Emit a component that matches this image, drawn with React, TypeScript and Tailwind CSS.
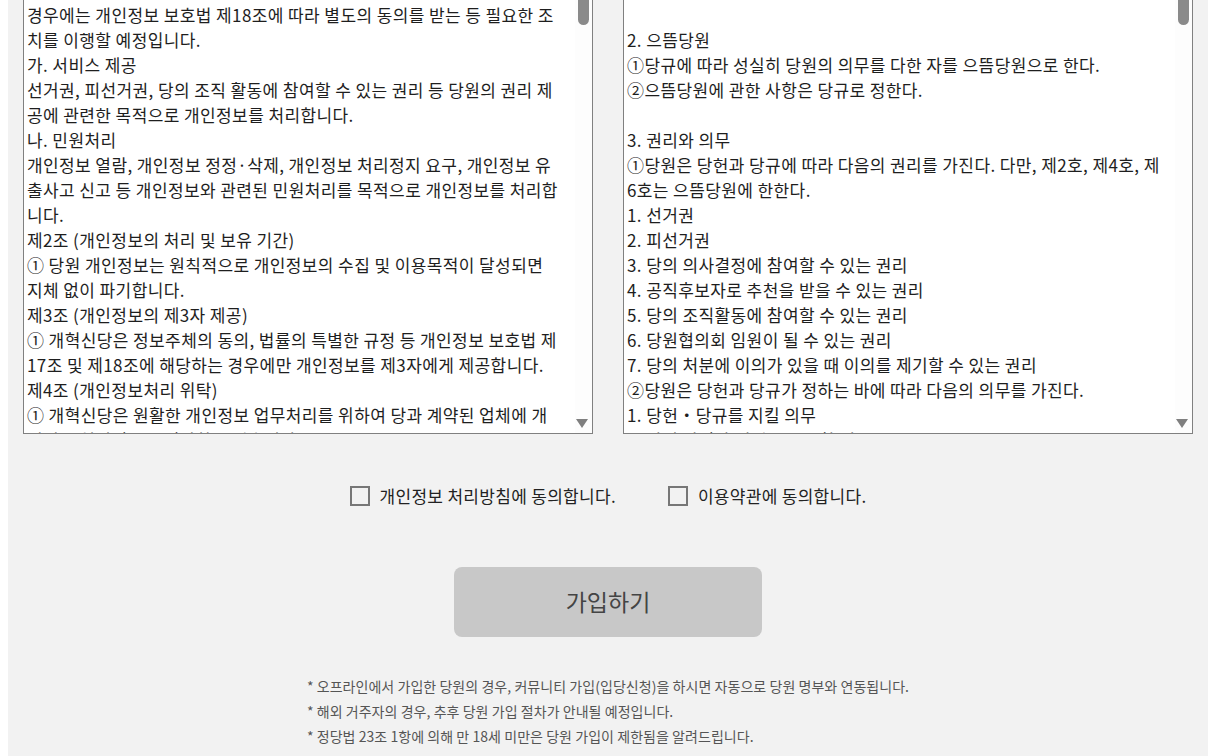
import React from 'react';

const privacyLines = [
  '경우에는 개인정보 보호법 제18조에 따라 별도의 동의를 받는 등 필요한 조',
  '치를 이행할 예정입니다.',
  '가. 서비스 제공',
  '선거권, 피선거권, 당의 조직 활동에 참여할 수 있는 권리 등 당원의 권리 제',
  '공에 관련한 목적으로 개인정보를 처리합니다.',
  '나. 민원처리',
  '개인정보 열람, 개인정보 정정·삭제, 개인정보 처리정지 요구, 개인정보 유',
  '출사고 신고 등 개인정보와 관련된 민원처리를 목적으로 개인정보를 처리합',
  '니다.',
  '제2조 (개인정보의 처리 및 보유 기간)',
  '① 당원 개인정보는 원칙적으로 개인정보의 수집 및 이용목적이 달성되면',
  '지체 없이 파기합니다.',
  '제3조 (개인정보의 제3자 제공)',
  '① 개혁신당은 정보주체의 동의, 법률의 특별한 규정 등 개인정보 보호법 제',
  '17조 및 제18조에 해당하는 경우에만 개인정보를 제3자에게 제공합니다.',
  '제4조 (개인정보처리 위탁)',
  '① 개혁신당은 원활한 개인정보 업무처리를 위하여 당과 계약된 업체에 개',
  '인정보 처리업무를 위탁하고 있습니다.',
];

const termsLines = [
  '',
  '2. 으뜸당원',
  '①당규에 따라 성실히 당원의 의무를 다한 자를 으뜸당원으로 한다.',
  '②으뜸당원에 관한 사항은 당규로 정한다.',
  '',
  '3. 권리와 의무',
  '①당원은 당헌과 당규에 따라 다음의 권리를 가진다. 다만, 제2호, 제4호, 제',
  '6호는 으뜸당원에 한한다.',
  '1. 선거권',
  '2. 피선거권',
  '3. 당의 의사결정에 참여할 수 있는 권리',
  '4. 공직후보자로 추천을 받을 수 있는 권리',
  '5. 당의 조직활동에 참여할 수 있는 권리',
  '6. 당원협의회 임원이 될 수 있는 권리',
  '7. 당의 처분에 이의가 있을 때 이의를 제기할 수 있는 권리',
  '②당원은 당헌과 당규가 정하는 바에 따라 다음의 의무를 가진다.',
  '1. 당헌・당규를 지킬 의무',
  '2. 당의 강령과 정책을 준수할 의무',
];

const notes = [
  '* 오프라인에서 가입한 당원의 경우, 커뮤니티 가입(입당신청)을 하시면 자동으로 당원 명부와 연동됩니다.',
  '* 해외 거주자의 경우, 추후 당원 가입 절차가 안내될 예정입니다.',
  '* 정당법 23조 1항에 의해 만 18세 미만은 당원 가입이 제한됨을 알려드립니다.',
];

const font = { fontFamily: '"Noto Sans CJK KR", "Noto Sans", sans-serif' };

function ScrollBox({ lines }: { lines: string[] }) {
  return (
    <div className="relative h-[434px] overflow-hidden border-x border-b border-[#808080] bg-white">
      <div className="pl-[3px] pt-[2px] pr-[24px] text-[17px] leading-[25px] tracking-[0.4px] text-[#1e1e1e]">
        {lines.map((line, i) => (
          <div key={i} className="h-[25px] whitespace-nowrap">
            {line}
          </div>
        ))}
      </div>
      {/* fake scrollbar */}
      <div className="absolute right-0 top-0 h-full w-[17px] bg-[#fdfdfd]">
        <div className="mx-auto h-[25px] w-[11px] rounded-b-full bg-[#8a8a8a]" />
      </div>
      <svg className="absolute bottom-[5px] right-[4px]" width="12" height="9" viewBox="0 0 12 9">
        <path d="M0 0 H12 L6 9 Z" fill="#7f7f7f" />
      </svg>
    </div>
  );
}

function CheckItem({ label }: { label: string }) {
  return (
    <label className="flex items-center gap-[10px] text-[17px] tracking-[0.3px] text-[#222]">
      <span className="h-[20px] w-[20px] border-2 border-[#777] bg-transparent" />
      {label}
    </label>
  );
}

export default function App() {
  return (
    <div className="min-h-screen bg-white" style={font}>
      <div className="ml-[8px] min-h-[756px] w-[1200px] bg-[#f2f2f2] px-[15px]">
        <div className="grid grid-cols-2 gap-[30px]">
          <ScrollBox lines={privacyLines} />
          <ScrollBox lines={termsLines} />
        </div>

        <div className="mt-[49px] flex justify-center gap-[52px]">
          <CheckItem label="개인정보 처리방침에 동의합니다." />
          <CheckItem label="이용약관에 동의합니다." />
        </div>

        <div className="mt-[58px] flex justify-center">
          <button
            type="button"
            className="h-[70px] w-[308px] rounded-[8px] bg-[#c8c8c8] text-[23px] text-[#444]"
          >
            가입하기
          </button>
        </div>

        <div className="mt-[37px] flex justify-center">
          <div className="text-[14px] leading-[25px] tracking-[0.05px] text-[#555]">
            {notes.map((n, i) => (
              <div key={i} className="whitespace-nowrap">
                {n}
              </div>
            ))}
          </div>
        </div>
      </div>
    </div>
  );
}
